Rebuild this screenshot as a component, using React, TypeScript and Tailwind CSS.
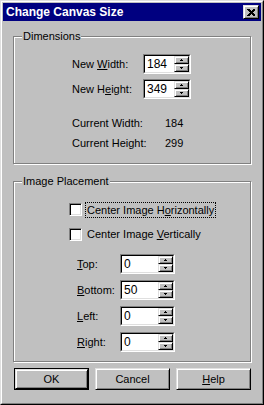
const Arrow = ({ down }: { down?: boolean }) => (
  <svg width="3" height="2" shapeRendering="crispEdges">
    {down ? (
      <>
        <rect x="0" y="0" width="3" height="1" fill="#000" />
        <rect x="1" y="1" width="1" height="1" fill="#000" />
      </>
    ) : (
      <>
        <rect x="1" y="0" width="1" height="1" fill="#000" />
        <rect x="0" y="1" width="3" height="1" fill="#000" />
      </>
    )}
  </svg>
);

const raised =
  "bg-[#c0c0c0] border border-t-[#dfdfdf] border-l-[#dfdfdf] border-r-black border-b-black shadow-[inset_1px_1px_0_#fff,inset_-1px_-1px_0_#808080]";

const Spin = () => (
  <div className="flex flex-col w-[15px]">
    <div className={`h-[8px] flex items-center justify-center ${raised}`}>
      <Arrow />
    </div>
    <div className={`h-[8px] flex items-center justify-center ${raised}`}>
      <Arrow down />
    </div>
  </div>
);

const NumField = ({ value, wide }: { value: string; wide?: boolean }) => (
  <div
    className={`${wide ? "w-[48px]" : "w-[55px]"} h-[20px] flex bg-white border border-t-[#808080] border-l-[#808080] border-r-white border-b-white`}
  >
    <div className="flex flex-1 border border-t-black border-l-black border-r-[#dfdfdf] border-b-[#dfdfdf]">
      <span className="flex-1 pl-[2px] text-[12px] leading-[16px]">{value}</span>
      <Spin />
    </div>
  </div>
);

const CheckBox = () => (
  <div className="w-[13px] h-[13px] bg-white border border-t-[#808080] border-l-[#808080] border-r-white border-b-white shadow-[inset_1px_1px_0_#000,inset_-1px_-1px_0_#dfdfdf]" />
);

const Group = ({ title, className, children }: { title: string; className: string; children: React.ReactNode }) => (
  <div className={`relative ml-[10px] w-[238px] border border-[#808080] shadow-[inset_1px_1px_0_#fff,1px_1px_0_#fff] ${className}`}>
    <span className="absolute -top-[7px] left-[8px] px-[1px] bg-[#c0c0c0] leading-[13px]">{title}</span>
    {children}
  </div>
);

const Btn = ({ children, isDefault }: { children: React.ReactNode; isDefault?: boolean }) =>
  isDefault ? (
    <div className="w-[75px] h-[22px] border border-black">
      <div className={`w-full h-full flex items-center justify-center ${raised}`}>{children}</div>
    </div>
  ) : (
    <div className={`w-[75px] h-[22px] flex items-center justify-center ${raised}`}>{children}</div>
  );

export default function App() {
  return (
    <div
      className="w-[264px] h-[405px] border border-t-[#dfdfdf] border-l-[#dfdfdf] border-r-black border-b-black text-[11px] text-black"
      style={{ fontFamily: "'Liberation Sans', Arial, sans-serif" }}
    >
      <div className="h-full bg-[#c0c0c0] border border-t-white border-l-white border-r-[#808080] border-b-[#808080] p-px">
        {/* Title bar */}
        <div className="h-[18px] bg-[#000080] flex items-center justify-between pl-[3px] pr-[2px]">
          <span className="text-white font-bold text-[12px] leading-[18px]">Change Canvas Size</span>
          <div className={`w-[16px] h-[14px] flex items-center justify-center ${raised}`}>
            <svg width="8" height="7" shapeRendering="crispEdges">
              <path d="M0 0h2l2 2 2-2h2v1L5.5 3.5 8 6v1H6L4 5 2 7H0V6l2.5-2.5L0 1z" fill="#000" />
            </svg>
          </div>
        </div>

        {/* Dimensions */}
        <Group title="Dimensions" className="mt-[15px] h-[128px] pt-[17px] pl-[58px]">
          <div className="flex items-center h-[20px]">
            <span className="w-[71px]">
              New <u className="underline-offset-1">W</u>idth:
            </span>
            <NumField value="184" wide />
          </div>
          <div className="flex items-center h-[20px] mt-[5px]">
            <span className="w-[71px]">
              New H<u className="underline-offset-1">e</u>ight:
            </span>
            <NumField value="349" wide />
          </div>
          <div className="flex items-center h-[20px] mt-[14px]">
            <span className="w-[93px]">Current Width:</span>
            <span>184</span>
          </div>
          <div className="flex items-center h-[20px]">
            <span className="w-[93px]">Current Height:</span>
            <span>299</span>
          </div>
        </Group>

        {/* Image Placement */}
        <Group title="Image Placement" className="mt-[17px] h-[181px] pt-[19px]">
          <div className="flex items-center h-[17px] pl-[55px]">
            <CheckBox />
            <span className="ml-[4px] px-[1px] outline outline-1 outline-dotted outline-black leading-[14px]">
              Center Image H<u className="underline-offset-1">o</u>rizontally
            </span>
          </div>
          <div className="flex items-center h-[17px] mt-[8px] pl-[55px]">
            <CheckBox />
            <span className="ml-[5px]">
              Center Image <u className="underline-offset-1">V</u>ertically
            </span>
          </div>
          <div className="flex flex-col gap-[6px] mt-[11px] pl-[63px]">
            {[
              ["T", "op:", "0"],
              ["B", "ottom:", "50"],
              ["L", "eft:", "0"],
              ["R", "ight:", "0"],
            ].map(([k, rest, v]) => (
              <div key={k} className="flex items-center h-[20px]">
                <span className="w-[43px]">
                  <u className="underline-offset-1">{k}</u>
                  {rest}
                </span>
                <NumField value={v} />
              </div>
            ))}
          </div>
        </Group>

        {/* Buttons */}
        <div className="flex gap-[6px] pl-[11px] mt-[6px]">
          <Btn isDefault>OK</Btn>
          <Btn>Cancel</Btn>
          <Btn>
            <span>
              <u className="underline-offset-1">H</u>elp
            </span>
          </Btn>
        </div>
      </div>
    </div>
  );
}
